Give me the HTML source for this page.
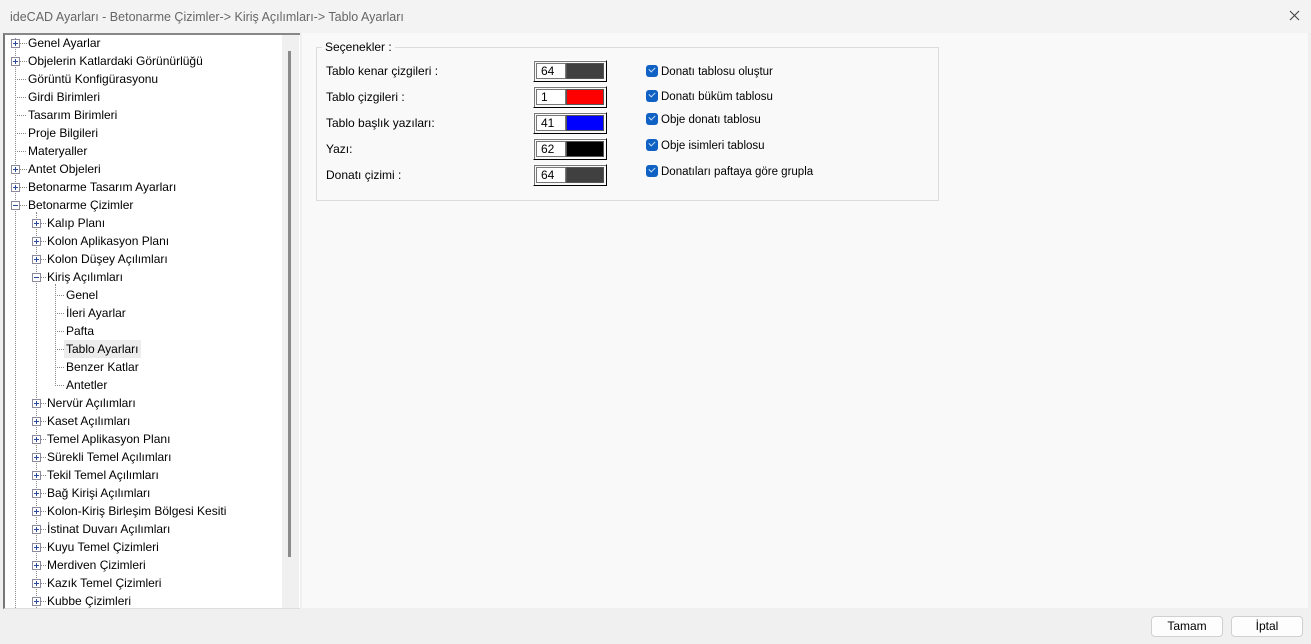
<!DOCTYPE html>
<html><head><meta charset="utf-8"><style>
*{margin:0;padding:0;box-sizing:border-box}
body{width:1311px;height:644px;overflow:hidden;background:#f0f0f0;font-family:"Liberation Sans",sans-serif;font-size:12px;color:#000;position:relative}
.abs{position:absolute}
#title{left:0;top:0;width:1311px;height:33px;background:#f3f3f3;color:#666;font-size:12.5px;padding:10px 0 0 10px}
#tree{left:3px;top:33px;width:297px;height:576px;background:#fff;border-top:2px solid #888;border-left:2px solid #777;border-bottom:1px solid #ddd;overflow:hidden}
#sb{left:282px;top:35px;width:17px;height:573px;background:#f0f0f0}
#thumb{left:288px;top:51px;width:3px;height:506px;background:#8a8a8a}
.r{position:absolute;height:18px;line-height:18px;white-space:nowrap}
.bx{position:absolute;width:9px;height:9px;border:1px solid #8a8a9a;background:#fff}
.bx:before{content:"";position:absolute;left:1px;top:3px;width:5px;height:1px;background:#2c4a9a}
.bx.p:after{content:"";position:absolute;left:3px;top:1px;width:1px;height:5px;background:#2c4a9a}
.h{position:absolute;height:1px;border-top:1px dotted #888}
.v{position:absolute;width:1px;border-left:1px dotted #888}
#right{left:302px;top:33px;width:1006px;height:575px;background:#f9f9f9}
#grp{left:316px;top:47px;width:623px;height:154px;border:1px solid #dcdcdc}
#grpl{left:322px;top:40px;background:#f9f9f9;padding:0 3px;font-size:12px}
.lbl{position:absolute;font-size:12px}
.cb{position:absolute;left:533px;width:74px;height:22px;border:1px solid #fff;border-right:1px solid #000;border-bottom:1px solid #000;box-shadow:inset 1px 1px 0 #777;}
.cb .n{position:absolute;left:2px;top:2px;width:30px;height:16px;background:#fff;border:1px solid #777;padding-left:4px;line-height:15px}
.cb .c{position:absolute;left:32px;top:2px;width:38px;height:16px;border:1px solid #555}
.chk{position:absolute;left:646px;width:12px;height:12px;border-radius:3px;background:#0f62c4}
.chk:after{content:"";position:absolute;left:3px;top:2px;width:5px;height:3px;border-left:1.3px solid #cfe0f7;border-bottom:1.3px solid #cfe0f7;transform:rotate(-45deg)}
.ct{position:absolute;left:661px;font-size:11.5px}
.btn{position:absolute;top:616px;width:72px;height:21px;background:#fdfdfd;border:1px solid #d0d0d0;border-radius:4px;text-align:center;line-height:19px;font-size:12px}
</style></head><body>
<div id="title" class="abs">ideCAD Ayarları - Betonarme Çizimler-&gt; Kiriş Açılımları-&gt; Tablo Ayarları</div>
<svg class="abs" style="left:1289px;top:10px" width="11" height="11"><path d="M1 1L10 10M10 1L1 10" stroke="#444" stroke-width="1.1"/></svg>
<div id="tree" class="abs"></div>
<div id="sb" class="abs"></div><div id="thumb" class="abs"></div>
<div id="right" class="abs"></div>
<div id="grp" class="abs"></div>
<div id="grpl" class="abs">Seçenekler :</div>
<div id="c"></div>
<div class="btn" style="left:1151px">Tamam</div>
<div class="btn" style="left:1231px">İptal</div>
<script>
var items=[[0,'p','Genel Ayarlar'],[0,'p','Objelerin Katlardaki Görünürlüğü'],[0,'','Görüntü Konfigürasyonu'],[0,'','Girdi Birimleri'],[0,'','Tasarım Birimleri'],[0,'','Proje Bilgileri'],[0,'','Materyaller'],[0,'p','Antet Objeleri'],[0,'p','Betonarme Tasarım Ayarları'],[0,'m','Betonarme Çizimler'],
[1,'p','Kalıp Planı'],[1,'p','Kolon Aplikasyon Planı'],[1,'p','Kolon Düşey Açılımları'],[1,'m','Kiriş Açılımları'],
[2,'','Genel'],[2,'','İleri Ayarlar'],[2,'','Pafta'],[2,'','Tablo Ayarları'],[2,'','Benzer Katlar'],[2,'','Antetler'],
[1,'p','Nervür Açılımları'],[1,'p','Kaset Açılımları'],[1,'p','Temel Aplikasyon Planı'],[1,'p','Sürekli Temel Açılımları'],[1,'p','Tekil Temel Açılımları'],[1,'p','Bağ Kirişi Açılımları'],[1,'p','Kolon-Kiriş Birleşim Bölgesi Kesiti'],[1,'p','İstinat Duvarı Açılımları'],[1,'p','Kuyu Temel Çizimleri'],[1,'p','Merdiven Çizimleri'],[1,'p','Kazık Temel Çizimleri'],[1,'p','Kubbe Çizimleri']];
var h='';
var lx=[15,36,55],tx=[28,47,66];
h+='<div class="v" style="left:15px;top:38px;height:170px"></div>';
h+='<div class="v" style="left:15px;top:208px;height:400px"></div>';
h+='<div class="v" style="left:36px;top:212px;height:396px"></div>';
h+='<div class="v" style="left:55px;top:284px;height:100px"></div>';
items.forEach(function(it,i){var cy=43+i*18,l=it[0];
 if(cy>610)return;
 if(it[1]){h+='<div class="h" style="left:'+(lx[l]+5)+'px;top:'+cy+'px;width:'+(tx[l]-lx[l]-6)+'px"></div><div class="bx '+(it[1]=='p'?'p':'')+'" style="left:'+(lx[l]-4)+'px;top:'+(cy-4)+'px"></div>';}
 else{h+='<div class="h" style="left:'+lx[l]+'px;top:'+cy+'px;width:'+(tx[l]-lx[l]-2)+'px"></div>';}
 var bg=it[2]=='Tablo Ayarları'?'background:#ececec;padding:0 2px;margin-left:-2px;':'';
 h+='<div class="r" style="left:'+tx[l]+'px;top:'+(cy-9)+'px;'+bg+'">'+it[2]+'</div>';
});
var rows=[['Tablo kenar çizgileri :','64','#404040'],['Tablo çizgileri :','1','#ff0000'],['Tablo başlık yazıları:','41','#0000ff'],['Yazı:','62','#000'],['Donatı çizimi :','64','#404040']];
rows.forEach(function(r,i){var cy=71+i*26;
 h+='<div class="lbl" style="left:326px;top:'+(cy-7)+'px">'+r[0]+'</div>';
 h+='<div class="cb" style="top:'+(cy-11)+'px"><div class="n">'+r[1]+'</div><div class="c" style="background:'+r[2]+'"></div></div>';});
['Donatı tablosu oluştur','Donatı büküm tablosu','Obje donatı tablosu','Obje isimleri tablosu','Donatıları paftaya göre grupla'].forEach(function(t,i){var cy=[71,96,119,145,171][i];
 h+='<div class="chk" style="top:'+(cy-6)+'px"></div><div class="ct" style="top:'+(cy-5)+'px">'+t+'</div>';});
document.getElementById('c').innerHTML=h;
</script>
</body></html>
